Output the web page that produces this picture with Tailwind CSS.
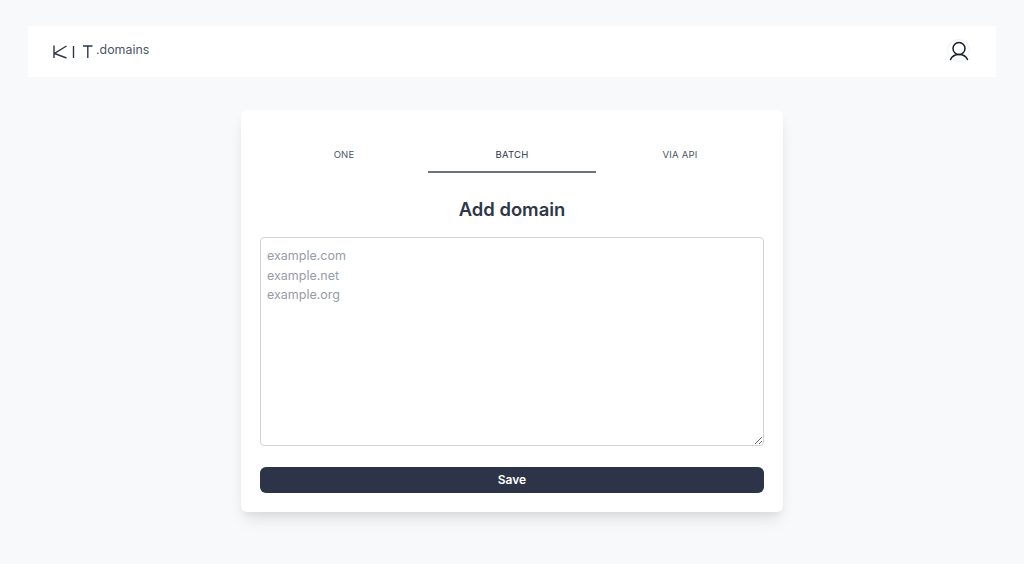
<!doctype html>
<html>
<head>
<meta charset="utf-8">
<script src="https://cdn.jsdelivr.net/npm/@tailwindcss/browser@4"></script>
<title>KIT.domains</title>
</head>
<body class="m-0 h-[564px] overflow-hidden bg-[#f8f9fb] font-['Inter',sans-serif] text-[#2d3748]">
<header class="mx-[28px] mt-[26px] flex h-[51px] items-center justify-between bg-white pl-[25px] pr-[25px]">
  <div class="flex items-center gap-[4px]">
    <svg width="40" height="14" viewBox="0 0 40 14" fill="none" stroke="#2d3748" stroke-width="1.4" aria-label="KIT">
      <path d="M1 0.500v12.500M13.500 1 1.500 8.500 13.500 13"/>
      <path d="M20.500 1v12"/>
      <path d="M30 1h9.500M34.800 1v12"/>
    </svg>
    <span class="relative top-[-1.500px] left-[-1px] text-[12.400px] leading-5 text-[#4a5568]">.domains</span>
  </div>
  <div class="relative top-[-1px] left-[-1px] flex h-[23px] w-[23px] items-center justify-center rounded-full border border-[#f0f1f3]">
    <svg width="20" height="20" viewBox="0 0 20 20" fill="none" stroke="#1a202c" stroke-width="1.5" stroke-linecap="round" aria-label="Account">
      <circle cx="10" cy="7.500" r="6"/>
      <path d="M1.500 18.500c1.500-3.200 4.400-5 8.500-5s7 1.800 8.500 5"/>
    </svg>
  </div>
</header>
<main class="flex justify-center pt-[33px]">
  <section class="h-[402px] w-[542px] rounded-md bg-white px-[19px] pt-[27px] shadow-[0_10px_15px_-3px_rgba(0,0,0,0.1),0_4px_6px_-2px_rgba(0,0,0,0.05)]">
    <nav class="grid grid-cols-3 text-center text-[9.500px] leading-4 tracking-[0.2px] text-[#4a5568]">
      <div class="h-[36px] pt-[10px]">ONE</div>
      <div class="h-[36px] border-b-2 border-[#6b7280] pt-[10px] text-[#2d3748]">BATCH</div>
      <div class="h-[36px] pt-[10px]">VIA API</div>
    </nav>
    <h1 class="mt-[22px] text-center text-[18.400px] leading-[28px] font-semibold text-[#2d3748]">Add domain</h1>
    <textarea class="mt-[14px] block h-[209px] w-full rounded border border-[#d1d5db] px-[6px] pt-[8px] pb-[7px] text-[12.500px] leading-[19.500px] text-[#2d3748] placeholder:text-[#969ca8]" placeholder="example.com&#10;example.net&#10;example.org"></textarea>
    <button class="mt-[21px] h-[26px] w-full rounded-md bg-[#2d3448] text-[12px] font-semibold text-white">Save</button>
  </section>
</main>
</body>
</html>
